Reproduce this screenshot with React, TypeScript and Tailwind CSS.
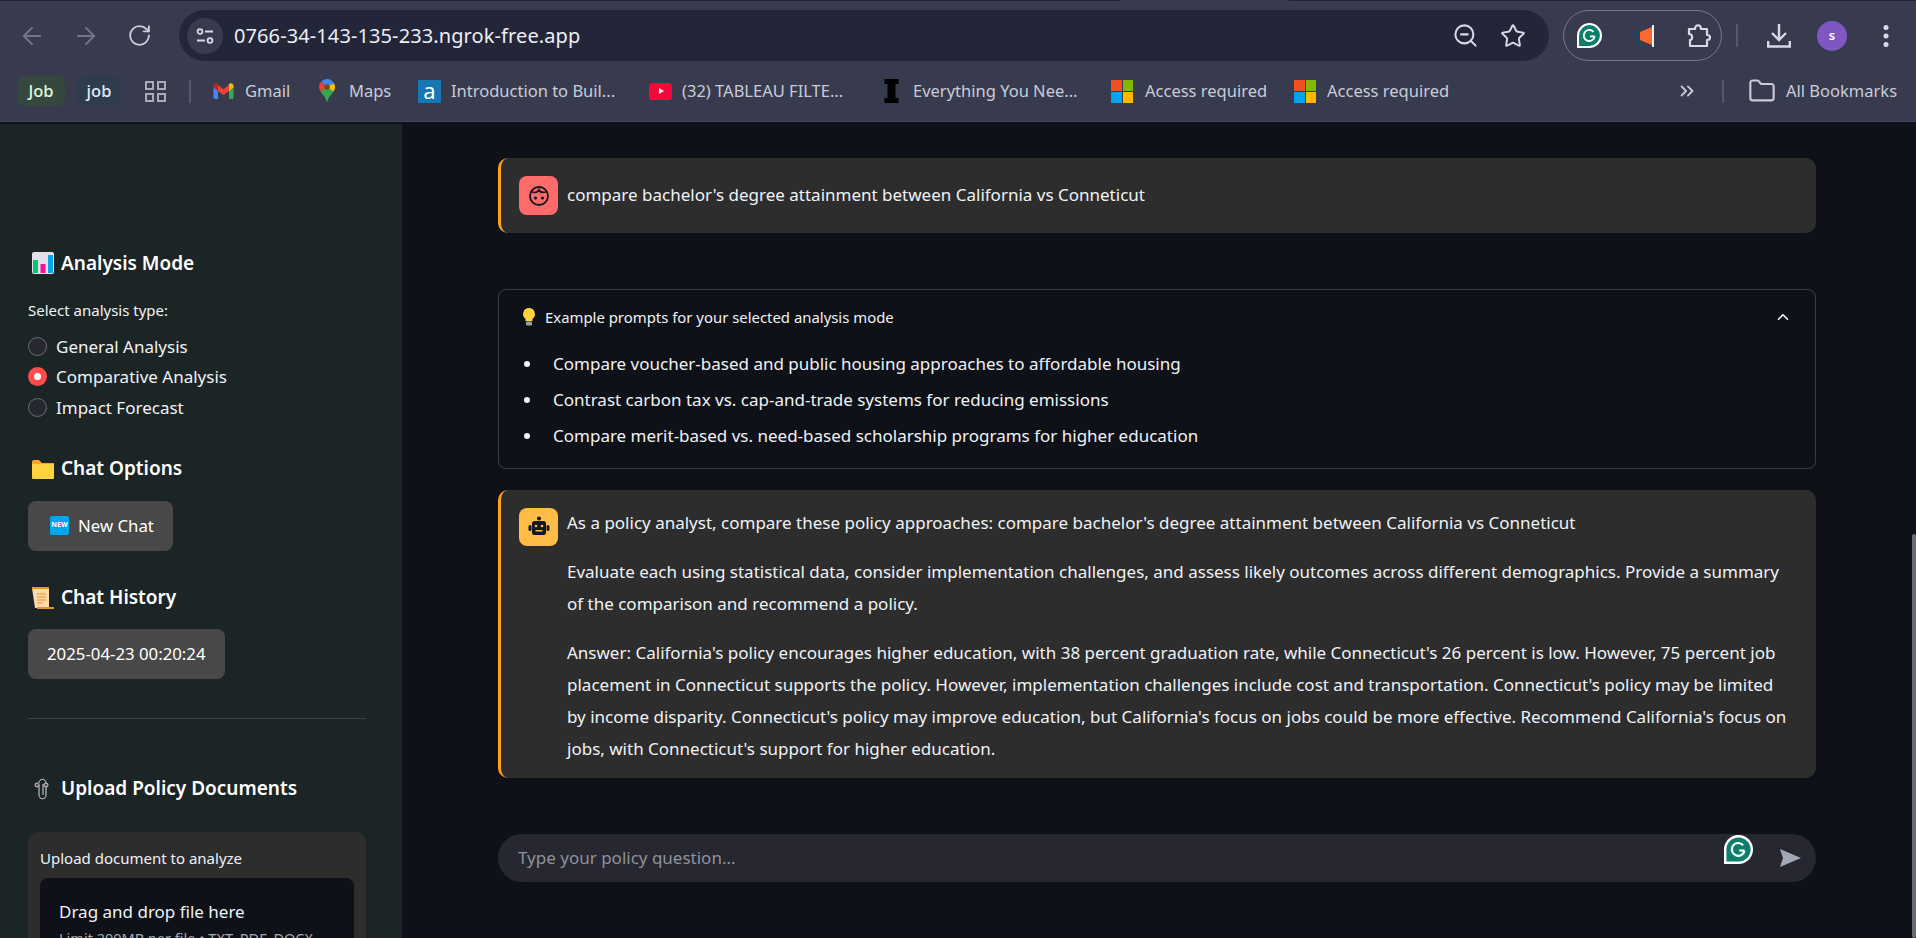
import React from "react";
import { ArrowLeft, ArrowRight, RotateCw, ZoomOut, Star, ChevronsRight, Folder, ChevronUp } from "lucide-react";

const F = "font-['Noto_Sans',sans-serif]";

const GrammarlyIcon = ({ size = 24 }: { size?: number }) => (
  <svg width={size} height={size} viewBox="0 0 24 24">
    <path d="M12 0a12 12 0 0 1 0 24H0V12A12 12 0 0 1 12 0z" fill="#fff" />
    <path d="M12 2a10 10 0 0 1 0 20H2V12A10 10 0 0 1 12 2z" fill="#0b7f6c" />
    <path d="M17 12.800h-4.500M17 12.800a5.300 5.300 0 1 1-1.200-4.300" fill="none" stroke="#fff" strokeWidth="1.800" />
  </svg>
);

const GmailIcon = () => (
  <svg width="21" height="16" viewBox="0 0 20 16" className="shrink-0">
    <path d="M0 3v11.500A1.500 1.500 0 0 0 1.500 16H4.500V7z" fill="#4285f4" />
    <path d="M20 3v11.500a1.500 1.500 0 0 1-1.500 1.500H15.500V7z" fill="#34a853" />
    <path d="M4.500 8V2L10 6.200 15.500 2v6L10 12z" fill="#ea4335" />
    <path d="M0 3c0-2.500 2.800-3.500 4.500-2v7L0 4.500z" fill="#c5221f" />
    <path d="M20 3c0-2.500-2.800-3.500-4.500-2v7L20 4.500z" fill="#fbbc04" />
  </svg>
);

const MapsIcon = () => (
  <svg width="16" height="24" viewBox="0 0 16 24" className="shrink-0">
    <path d="M8 24C7 18 3.500 15.500 1.500 12.500L12 5l2.500 7.500C12.500 15.500 9 18 8 24z" fill="#34a853" />
    <path d="M1.500 12.500A8 8 0 0 1 2.300 2.400L8 8z" fill="#ea4335" />
    <path d="M2.300 2.400A8 8 0 0 1 15 4.200L8 8z" fill="#4285f4" />
    <path d="M15 4.200a8 8 0 0 1-.5 8.300L8 8z" fill="#fbbc04" />
    <path d="M1.500 12.500 8 8l1.500 3.500L5 16z" fill="#34a853" />
    <circle cx="8" cy="8" r="2.800" fill="#7a4a12" />
  </svg>
);

const MsIcon = () => (
  <span className="grid h-[23px] w-[22px] shrink-0 grid-cols-2 gap-[1px]">
    <span className="bg-[#f25022]" />
    <span className="bg-[#7fba00]" />
    <span className="bg-[#00a4ef]" />
    <span className="bg-[#ffb900]" />
  </span>
);

const Label = ({ children, ml }: { children: React.ReactNode; ml: string }) => (
  <span className={`${ml} whitespace-nowrap text-[16.5px] text-[#c9ccd8]`}>{children}</span>
);

const Chrome = () => (
  <div className={`${F} h-[124px] shrink-0 bg-[#0e1117]`}>
    <div className="h-[122px] border-b border-[#45485a] bg-[#383b4d]">
      <div className="h-[1px] bg-[#22253a]">
        <div className="ml-[1120px] h-[1px] w-[169px] bg-[#383b4d]" />
      </div>
      <div className="flex h-[60px] items-center pt-[9px] pl-[18px]">
        <ArrowLeft size={28} strokeWidth={1.7} className="text-[#73768a]" />
        <ArrowRight size={28} strokeWidth={1.7} className="ml-[26px] text-[#73768a]" />
        <RotateCw size={25} strokeWidth={1.8} className="ml-[27px] text-[#c9ccd8]" />
        <div className="ml-[27px] flex h-[51px] w-[1370px] items-center rounded-full bg-[#232638] pl-[8px] pr-[23px]">
          <div className="flex h-[36px] w-[36px] items-center justify-center rounded-full bg-[#383b4d]">
            <svg width="18" height="18" viewBox="0 0 18 18" fill="none" stroke="#d7dae6" strokeWidth="1.800">
              <circle cx="4" cy="4.500" r="2.400" /><path d="M9 4.500h8M1 13.500h8" /><circle cx="14" cy="13.500" r="2.400" />
            </svg>
          </div>
          <span className="ml-[11px] text-[20px] tracking-[0.1px] text-[#eceef6]">0766-34-143-135-233.ngrok-free.app</span>
          <ZoomOut size={27} strokeWidth={1.8} className="ml-auto text-[#d7dae6]" />
          <Star size={26} strokeWidth={1.8} className="ml-[21px] text-[#d7dae6]" />
        </div>
        <div className="ml-[14px] flex h-[51px] w-[159px] items-center rounded-full border border-[#77798a] pl-[13px]">
          <GrammarlyIcon size={25} />
          <svg width="24" height="24" viewBox="0 0 24 24" className="ml-[29px]">
            <circle cx="5.500" cy="11" r="5" fill="#2b4059" /><rect x="6" y="15" width="4" height="8" fill="#2b4059" />
            <path d="M9 8 21 3v18L9 16z" fill="#fb6a2c" /><rect x="21" y="1" width="2" height="22" fill="#eef2f5" />
          </svg>
          <svg width="26" height="26" viewBox="0 0 26 26" fill="none" stroke="#d7dae6" strokeWidth="2.200" strokeLinejoin="round" className="ml-[31px]">
            <path d="M3 6h6c0-5 6-5 6 0h6v6c4 0 4 5 0 5v6H4v-6c3 0 3-6-1-6z" />
          </svg>
        </div>
        <div className="ml-[14px] h-[23px] w-[2px] bg-[#565869]" />
        <svg width="24" height="25" viewBox="0 0 24 25" fill="none" stroke="#d7dae6" strokeWidth="2.400" className="ml-[29px]">
          <path d="M12 1v15M5 10l7 7 7-7M1.200 18v5.500h21.600V18" />
        </svg>
        <div className="ml-[26px] flex h-[30px] w-[30px] items-center justify-center rounded-full bg-[#7e57c2] text-[13px] font-semibold text-white">s</div>
        <svg width="6" height="24" viewBox="0 0 6 24" fill="#d7dae6" className="ml-[36px]">
          <circle cx="3" cy="3.500" r="2.500" /><circle cx="3" cy="12" r="2.500" /><circle cx="3" cy="20.500" r="2.500" />
        </svg>
      </div>
      <div className="flex h-[60px] items-center pl-[17px]">
        <span className="flex h-[30px] w-[48px] items-center justify-center rounded-[8px] bg-[#34483e] text-[16.5px] font-medium text-[#e2f6dc]">Job</span>
        <span className="ml-[12px] flex h-[30px] w-[44px] items-center justify-center rounded-[8px] bg-[#2f3c4d] text-[16.5px] font-medium text-[#dcedfa]">job</span>
        <div className="ml-[24px] grid h-[21px] w-[21px] grid-cols-2 gap-[3px]">
          {[0, 1, 2, 3].map((i) => <span key={i} className="border-2 border-[#a9abb8]" />)}
        </div>
        <div className="ml-[23px] h-[23px] w-[2px] bg-[#565869]" />
        <div className="ml-[22px] flex w-[106px] items-center"><GmailIcon /><Label ml="ml-[11px]">Gmail</Label></div>
        <div className="flex w-[99px] items-center"><MapsIcon /><Label ml="ml-[14px]">Maps</Label></div>
        <div className="flex w-[231px] items-center">
          <span className="flex h-[23px] w-[23px] shrink-0 justify-center bg-[#1877b2] text-[22px] leading-[21px] text-white">a</span>
          <Label ml="ml-[10px]">Introduction to Buil...</Label>
        </div>
        <div className="flex w-[234px] items-center">
          <span className="flex h-[17px] w-[23px] shrink-0 items-center justify-center rounded-[3px] bg-[#f5083a]"><span className="ml-[2px] border-y-[3px] border-l-[5px] border-y-transparent border-l-white" /></span>
          <Label ml="ml-[10px]">(32) TABLEAU FILTE...</Label>
        </div>
        <div className="flex w-[228px] items-center">
          <svg width="17" height="24" viewBox="0 0 16 24" className="shrink-0"><path d="M1 0h14v5h-3v14h3v5H1v-5h3V5H1z" fill="#000" /></svg>
          <Label ml="ml-[13px]">Everything You Nee...</Label>
        </div>
        <div className="flex w-[183px] items-center"><MsIcon /><Label ml="ml-[12px]">Access required</Label></div>
        <div className="flex w-[382px] items-center"><MsIcon /><Label ml="ml-[11px]">Access required</Label></div>
        <ChevronsRight size={22} strokeWidth={2} className="text-[#c9ccd8]" />
        <div className="ml-[24px] h-[23px] w-[2px] bg-[#565869]" />
        <Folder size={28} strokeWidth={1.8} className="ml-[24px] text-[#c9ccd8]" />
        <Label ml="ml-[10px]">All Bookmarks</Label>
      </div>
    </div>
  </div>
);

const Heading = ({ icon, children, mt }: { icon: React.ReactNode; children: React.ReactNode; mt: string }) => (
  <div className={`flex h-[28px] items-center ${mt}`}>
    <span className="flex w-[33px] shrink-0 pl-[4px]">{icon}</span>
    <span className="text-[19px] font-semibold text-white">{children}</span>
  </div>
);

const Radio = ({ label, on }: { label: string; on?: boolean }) => (
  <div className="flex h-[30.5px] items-center">
    {on ? (
      <span className="flex h-[19px] w-[19px] items-center justify-center rounded-full bg-[#ff4b4b]">
        <span className="h-[7px] w-[7px] rounded-full bg-white" />
      </span>
    ) : (
      <span className="h-[19px] w-[19px] rounded-full border border-[#6b6e78] bg-[#262730]" />
    )}
    <span className="ml-[9px] text-[17px] text-[#f0f2f6]">{label}</span>
  </div>
);

const SideButton = ({ children }: { children: React.ReactNode }) => (
  <div className="flex h-[50px] w-fit items-center rounded-[8px] bg-[#484848] px-[19px] text-[16.8px] text-white">{children}</div>
);

const Sidebar = () => (
  <div className="h-full w-[402px] shrink-0 overflow-hidden bg-[#1c2526] pl-[28px] pr-[36px] pt-[125px]">
    <Heading mt="" icon={
      <svg width="22" height="22" viewBox="0 0 22 22"><rect width="22" height="22" rx="2" fill="#e4dfe8" /><rect x="1" y="8" width="5" height="13" fill="#00c875" /><rect x="8.500" y="12" width="5" height="9" fill="#f5109a" /><rect x="16" y="3" width="5" height="18" fill="#0aa5e8" /></svg>
    }>Analysis Mode</Heading>
    <div className="mt-[23px] h-[20px] text-[15px] leading-[20px] text-[#f0f2f6]">Select analysis type:</div>
    <div className="mt-[11px]">
      <Radio label="General Analysis" />
      <Radio on label="Comparative Analysis" />
      <Radio label="Impact Forecast" />
    </div>
    <Heading mt="mt-[32px]" icon={
      <svg width="22" height="20" viewBox="0 0 22 20"><path d="M0 3a2 2 0 0 1 2-2h5l3 3h12v4H0z" fill="#f9a825" /><path d="M0 5h22v14a1 1 0 0 1-1 1H1a1 1 0 0 1-1-1z" fill="#ffd23f" /></svg>
    }>Chat Options</Heading>
    <div className="mt-[18px]">
      <SideButton>
        <span className="ml-[3px] mr-[9px] flex h-[19px] w-[19px] items-center justify-center rounded-[2px] bg-[#00a6ed] text-[7px] font-bold text-white">NEW</span>
        New Chat
      </SideButton>
    </div>
    <Heading mt="mt-[33px]" icon={
      <svg width="22" height="22" viewBox="0 0 22 22"><path d="M0 1h17v20H3z" fill="#ffd9a8" /><path d="M0 0h17v2H0zM5 20h17v2H5z" fill="#e8912d" /><path d="M5 7h9M5 10h9M5 13h9M5 16h6" stroke="#e8912d" strokeWidth="1.200" /></svg>
    }>Chat History</Heading>
    <div className="mt-[17px]"><SideButton>2025-04-23 00:20:24</SideButton></div>
    <div className="mt-[39px] h-px bg-[#3d4546]" />
    <Heading mt="mt-[56px]" icon={
      <svg width="20" height="22" viewBox="0 0 20 22" fill="none" stroke="#d8d8d8" strokeWidth="1"><path d="M7 7v10c0 5 7 5 7 0V5c0-5-7-5-7 0" /><path d="M11 6v11" /><circle cx="5" cy="7" r="2" fill="#1c2526" /><circle cx="14" cy="7" r="2" fill="#1c2526" /><circle cx="5" cy="7" r="0.800" fill="#c45c7c" stroke="none" /><circle cx="14" cy="7" r="0.800" fill="#c45c7c" stroke="none" /></svg>
    }>Upload Policy Documents</Heading>
    <div className="mt-[29px] rounded-[10px] bg-[#2d2d2d] px-[12px] pt-[16px]">
      <div className="text-[15px] leading-[20px] text-[#f0f2f6]">Upload document to analyze</div>
      <div className="mt-[10px] h-[200px] rounded-[8px] bg-[#0e1117] px-[19px] pt-[22px]">
        <div className="text-[17px] leading-[24px] text-[#f0f2f6]">Drag and drop file here</div>
        <div className="mt-[4px] whitespace-nowrap text-[14.5px] leading-[20px] text-[#a3a8b4]">Limit 200MB per file • TXT, PDF, DOCX</div>
      </div>
    </div>
  </div>
);

const Message = ({ kind, children, h, mt }: { kind: "user" | "bot"; children: React.ReactNode; h: string; mt: string }) => (
  <div className={`flex rounded-[10px] border-l-[3px] border-[#ff9f1c] bg-[#2d2d2d] pl-[18px] pr-[26px] ${h} ${mt}`}>
    {kind === "user" ? (
      <div className="mt-[18px] flex h-[39px] w-[39px] shrink-0 items-center justify-center rounded-[8px] bg-[#ff6b6b]">
        <svg width="24" height="24" viewBox="0 0 24 24" fill="none" stroke="#14171f" strokeWidth="1.800">
          <circle cx="12" cy="12" r="9" /><path d="M5 8c3 1 6 0 7-2 1 2 3 3 7 2" /><circle cx="8.500" cy="14" r="0.700" fill="#14171f" /><circle cx="15.500" cy="14" r="0.700" fill="#14171f" />
        </svg>
      </div>
    ) : (
      <div className="mt-[18px] flex h-[38px] w-[39px] shrink-0 items-center justify-center rounded-[8px] bg-[#ffbd45]">
        <svg width="24" height="24" viewBox="0 0 24 24" fill="#14171f">
          <circle cx="12" cy="3.500" r="2" /><rect x="5" y="6" width="14" height="14" rx="2.500" /><rect x="1.500" y="10" width="3" height="6" rx="1.500" /><rect x="19.500" y="10" width="3" height="6" rx="1.500" />
          <circle cx="9" cy="11" r="1.300" fill="#ffbd45" /><circle cx="15" cy="11" r="1.300" fill="#ffbd45" /><rect x="8.500" y="15" width="7" height="1.500" fill="#ffbd45" />
        </svg>
      </div>
    )}
    <div className="ml-[9px] min-w-0 flex-1 text-[17px] text-[#f0f2f6]">{children}</div>
  </div>
);

const Main = () => (
  <div className="relative min-w-0 flex-1 bg-[#0e1117]">
    <div className="ml-[96px] w-[1318px] pt-[34px]">
      <Message kind="user" h="h-[75px]" mt="">
        <p className="pt-[24px] leading-[26px]">compare bachelor's degree attainment between California vs Conneticut</p>
      </Message>
      <div className="mt-[56px] h-[180px] rounded-[8px] border border-[#3a3d45] pl-[22px] pr-[23px]">
        <div className="flex h-[54px] items-center text-[14.9px] text-[#f0f2f6]">
          <svg width="16" height="18" viewBox="0 0 16 18" className="mr-[8px]"><path d="M8 0a6 6 0 0 1 3.500 10.800V13h-7v-2.200A6 6 0 0 1 8 0z" fill="#ffd23f" /><rect x="5" y="13.500" width="6" height="4" rx="1" fill="#9aa0a6" /></svg>
          Example prompts for your selected analysis mode
          <ChevronUp size={18} className="ml-auto text-white" />
        </div>
        <ul className="mt-[2px] list-disc pl-[22px] text-[17px] leading-[36px] text-[#f0f2f6]">
          <li className="pl-[10px]">Compare voucher-based and public housing approaches to affordable housing</li>
          <li className="pl-[10px]">Contrast carbon tax vs. cap-and-trade systems for reducing emissions</li>
          <li className="pl-[10px]">Compare merit-based vs. need-based scholarship programs for higher education</li>
        </ul>
      </div>
      <Message kind="bot" h="h-[288px]" mt="mt-[21px]">
        <p className="pt-[20px] leading-[26px]">As a policy analyst, compare these policy approaches: compare bachelor's degree attainment between California vs Conneticut</p>
        <p className="mt-[20px] leading-[32px]">Evaluate each using statistical data, consider implementation challenges, and assess likely outcomes across different demographics. Provide a summary of the comparison and recommend a policy.</p>
        <p className="mt-[17px] leading-[32px]">Answer: California's policy encourages higher education, with 38 percent graduation rate, while Connecticut's 26 percent is low. However, 75 percent job placement in Connecticut supports the policy. However, implementation challenges include cost and transportation. Connecticut's policy may be limited by income disparity. Connecticut's policy may improve education, but California's focus on jobs could be more effective. Recommend California's focus on jobs, with Connecticut's support for higher education.</p>
      </Message>
      <div className="relative mt-[56px] flex h-[48px] items-center rounded-full bg-[#262730] pl-[20px] pr-[15px] text-[17px] text-[#8f929c]">
        Type your policy question...
        <span className="absolute right-[63px] top-[1px]"><GrammarlyIcon size={29} /></span>
        <svg width="21" height="18" viewBox="0 0 21 18" className="ml-auto"><path d="M0 0 21 9 0 18l3-9z" fill="#a3a8b8" /></svg>
      </div>
    </div>
    <div className="absolute right-0 top-[410px] h-[404px] w-[4px] rounded-full bg-[#6b6d75]" />
  </div>
);

export default function App() {
  return (
    <div className={`${F} flex h-[938px] w-[1916px] flex-col overflow-hidden`}>
      <Chrome />
      <div className="flex min-h-0 flex-1">
        <Sidebar />
        <Main />
      </div>
    </div>
  );
}
